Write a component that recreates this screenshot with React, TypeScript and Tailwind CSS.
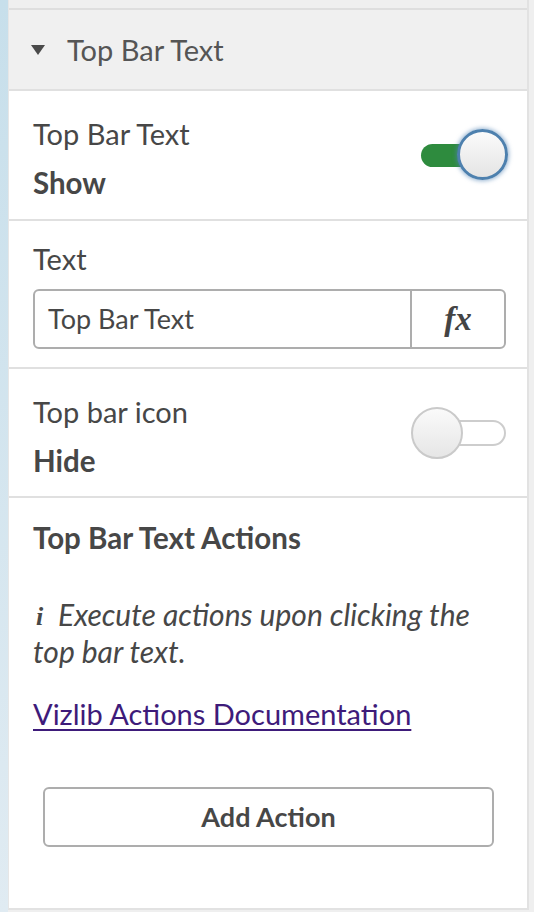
import React from "react";

const font = { fontFamily: "Lato, 'Open Sans', sans-serif" };

function ToggleOn() {
  return (
    <div className="relative w-[97px] h-[54px] shrink-0">
      <div className="absolute left-[10px] top-[16px] h-[23px] w-[70px] rounded-full bg-[#2e8b3e]" />
      <div className="absolute right-0 top-[1px] w-[51px] h-[51px] rounded-full border-[3px] border-[#4d80ae] bg-gradient-to-b from-[#fbfbfb] to-[#e4e4e4] shadow-[0_0_4px_1px_rgba(80,130,180,0.6)]" />
    </div>
  );
}

function ToggleOff() {
  return (
    <div className="relative w-[97px] h-[54px] shrink-0">
      <div className="absolute left-[4px] top-[14px] h-[26px] w-[91px] rounded-full border-2 border-[#cdcdcd] bg-white" />
      <div className="absolute left-0 top-[1px] w-[52px] h-[52px] rounded-full border-2 border-[#cacaca] bg-gradient-to-b from-[#fafafa] to-[#e6e6e6]" />
    </div>
  );
}

export default function App() {
  return (
    <div className="w-[534px] h-[912px] flex bg-[#efefef] overflow-hidden text-[#474747]" style={font}>
      <div className="w-[8px] h-full bg-gradient-to-b from-[#c7dfeb] to-[#e0ebf2]" />
      <div className="w-[521px] h-[910px] flex flex-col border-l border-[#e6e6e6] border-r-2 border-r-[#e2e2e2] border-b-2 border-b-[#e2e2e2] bg-white">
        <div className="h-[8px] bg-[#efefef]" />
        <div className="h-[2px] bg-[#dedede]" />
        <div className="h-[79px] bg-[#f0f0f0] flex items-center pl-[22px] pt-[1px]">
          <svg width="14" height="10" viewBox="0 0 14 10" className="shrink-0">
            <path d="M0 0 L14 0 L7 10 Z" fill="#4a4a4a" />
          </svg>
          <span className="ml-[22px] text-[29px] leading-[36px] text-[#555]">Top Bar Text</span>
        </div>
        <div className="h-[2px] bg-[#e0e0e0]" />

        <div className="h-[128px] flex items-center justify-between pl-[24px] pr-[19px]">
          <div className="flex flex-col gap-[13px] pt-[7px]">
            <div className="text-[29px] leading-[36px]">Top Bar Text</div>
            <div className="text-[29.5px] leading-[36px] font-bold">Show</div>
          </div>
          <ToggleOn />
        </div>
        <div className="h-[2px] bg-[#e0e0e0]" />

        <div className="h-[146px] flex flex-col pl-[24px] pr-[21px] pt-[20px]">
          <div className="text-[29px] leading-[36px]">Text</div>
          <div className="mt-[12px] h-[60px] flex rounded-[6px] border-2 border-[#adadad]">
            <div className="flex-1 flex items-center pl-[13px] text-[27px]">Top Bar Text</div>
            <div className="w-[94px] border-l-2 border-[#adadad] flex items-center justify-center">
              <span className="text-[33px] leading-none font-bold italic text-[#444]" style={{ fontFamily: "'Liberation Serif', serif" }}>fx</span>
            </div>
          </div>
        </div>
        <div className="h-[2px] bg-[#e0e0e0]" />

        <div className="h-[127px] flex items-center justify-between pl-[24px] pr-[19px]">
          <div className="flex flex-col gap-[13px] pt-[8px]">
            <div className="text-[29px] leading-[36px]">Top bar icon</div>
            <div className="text-[29.5px] leading-[36px] font-bold">Hide</div>
          </div>
          <ToggleOff />
        </div>
        <div className="h-[2px] bg-[#e0e0e0]" />

        <div className="flex-1 flex flex-col pl-[24px] pr-[20px] pt-[22px]">
          <div className="text-[29.5px] leading-[36px] font-bold">Top Bar Text Actions</div>
          <p className="mt-[41px] text-[30px] leading-[35px] italic whitespace-nowrap">
            <span className="inline-block w-[25px] pl-[3px] font-bold text-[26px] align-[1px]" style={{ fontFamily: "'Liberation Serif', serif" }}>i</span>
            Execute actions upon clicking the
            <br />
            top bar text.
          </p>
          <a href="#" className="mt-[27px] text-[29px] leading-[36px] text-[#3e1b7a] underline underline-offset-[4px] decoration-[2px] self-start">
            Vizlib Actions Documentation
          </a>
          <div className="mt-[55px] ml-[10px] w-[451px] h-[60px] rounded-[6px] border-2 border-[#adadad] flex items-center justify-center text-[27px] font-bold text-[#474747]">
            Add Action
          </div>
        </div>
      </div>
    </div>
  );
}
